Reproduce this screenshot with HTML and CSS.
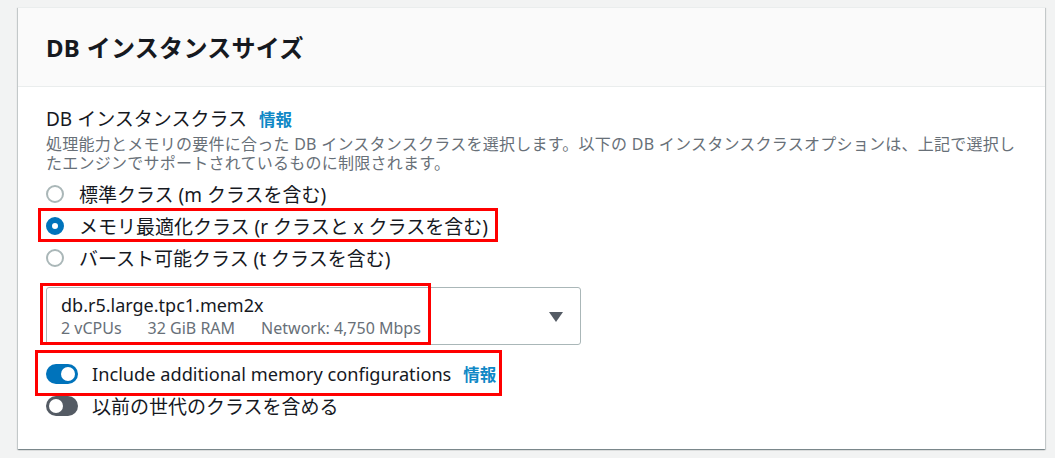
FILE: index.html
```html
<!DOCTYPE html>
<html lang="ja">
<head>
<meta charset="utf-8">
<title>DB インスタンスサイズ</title>
<link rel="stylesheet" href="styles.css">
</head>
<body>
<section class="card">
  <div class="card-header">
    <h2 class="card-title">DB インスタンスサイズ</h2>
  </div>
  <div class="card-body">
    <div class="field-label">DB インスタンスクラス <a class="info">情報</a></div>
    <p class="field-desc">処理能力とメモリの要件に合った DB インスタンスクラスを選択します。以下の DB インスタンスクラスオプションは、上記で選択したエンジンでサポートされているものに制限されます。</p>
    <div class="radio-group">
      <label class="radio"><span class="radio-control"></span>標準クラス (m クラスを含む)</label>
      <label class="radio radio-checked mark mark-radio"><span class="radio-control"></span>メモリ最適化クラス (r クラスと x クラスを含む)</label>
      <label class="radio"><span class="radio-control"></span>バースト可能クラス (t クラスを含む)</label>
    </div>
    <div class="select">
      <div class="select-value mark mark-select">
        <div class="select-name">db.r5.large.tpc1.mem2x</div>
        <div class="select-tags"><span>2 vCPUs</span><span>32 GiB RAM</span><span>Network: 4,750 Mbps</span></div>
      </div>
      <svg class="select-caret" width="14" height="10" viewBox="0 0 14 10"><path d="M0 0 H14 L7 10 Z" fill="#545b64"/></svg>
    </div>
    <div class="toggle-row mark mark-toggle">
      <span class="toggle toggle-on"><span class="toggle-knob"></span></span>
      <span class="toggle-label latin">Include additional memory configurations</span>
      <a class="info">情報</a>
    </div>
    <div class="toggle-row">
      <span class="toggle"><span class="toggle-knob"></span></span>
      <span class="toggle-label">以前の世代のクラスを含める</span>
    </div>
  </div>
</section>
</body>
</html>
```
FILE: styles.css
```css
* { box-sizing: border-box; }
html, body { margin: 0; padding: 0; }
body {
  background: #f2f3f3;
  font-family: "Noto Sans", "Noto Sans CJK JP", sans-serif;
  color: #16191f;
  padding: 7px 10px 10px 18px;
}
.card {
  width: 1027px;
  background: #fff;
  box-shadow: 0 1px 1px 0 rgba(0, 28, 36, 0.3), 1px 1px 1px 0 rgba(0, 28, 36, 0.15), -1px 1px 1px 0 rgba(0, 28, 36, 0.15);
  border-top: 1px solid #eaeded;
}
.card-header {
  height: 79px;
  background: #fafafa;
  border-bottom: 1px solid #eaeded;
  display: flex;
  align-items: center;
  padding: 0 28px 2px;
}
.card-title {
  margin: 0;
  font-size: 24px;
  font-weight: 700;
  letter-spacing: 0.3px;
  color: #16191f;
}
.card-body {
  padding: 20px 28px 27px;
}
.field-label {
  font-size: 19px;
  line-height: 24px;
}
.info {
  color: #0f88c6;
  font-weight: 700;
  font-size: 16.5px;
  margin-left: 7px;
}
.field-desc {
  margin: 3px 0 0;
  font-size: 16px;
  line-height: 19px;
  letter-spacing: 0.25px;
  color: #687078;
}
.radio-group {
  margin-top: 5px;
  display: flex;
  flex-direction: column;
}
.radio {
  display: flex;
  align-items: center;
  height: 32px;
  width: fit-content;
  font-size: 19px;
  gap: 15px;
}
.radio-control {
  width: 18px;
  height: 18px;
  border-radius: 50%;
  border: 2px solid #aab7b8;
  background: #fff;
  flex: none;
}
.radio-checked .radio-control {
  border: 6px solid #0073bb;
}
.mark { position: relative; }
.mark::after {
  content: "";
  position: absolute;
  border: 3px solid #ff0000;
  pointer-events: none;
}
.mark-radio::after { inset: -2px -10px 0 -8px; }
.mark-select::after { inset: -11px -10px -6px -21px; }
.mark-toggle::after { inset: -7px -6px -6px -11px; }

.select {
  margin-top: 13px;
  width: 535px;
  height: 58px;
  border: 1px solid #aab7b8;
  border-radius: 3px;
  display: flex;
  align-items: flex-start;
  justify-content: space-between;
  padding: 6px 17px 0 14px;
}
.select-name {
  font-size: 18px;
  line-height: 23px;
}
.select-tags {
  display: flex;
  gap: 26px;
  font-size: 16px;
  line-height: 22px;
  color: #687078;
}
.select-caret {
  margin-top: 18px;
}
.toggle-row {
  margin-top: 12px;
  display: flex;
  align-items: center;
  height: 33px;
  width: fit-content;
  font-size: 19px;
}
.toggle-row + .toggle-row { margin-top: -1px; }
.toggle-label.latin { font-size: 18.2px; }
.toggle {
  width: 32px;
  height: 20px;
  border-radius: 10px;
  background: #545b64;
  display: flex;
  align-items: center;
  padding: 0 3px;
  margin-right: 14px;
  flex: none;
}
.toggle-on {
  background: #0073bb;
  justify-content: flex-end;
}
.toggle-knob {
  width: 14px;
  height: 14px;
  border-radius: 50%;
  background: #fff;
}
.toggle-row .info { margin-left: 12px; }
```
